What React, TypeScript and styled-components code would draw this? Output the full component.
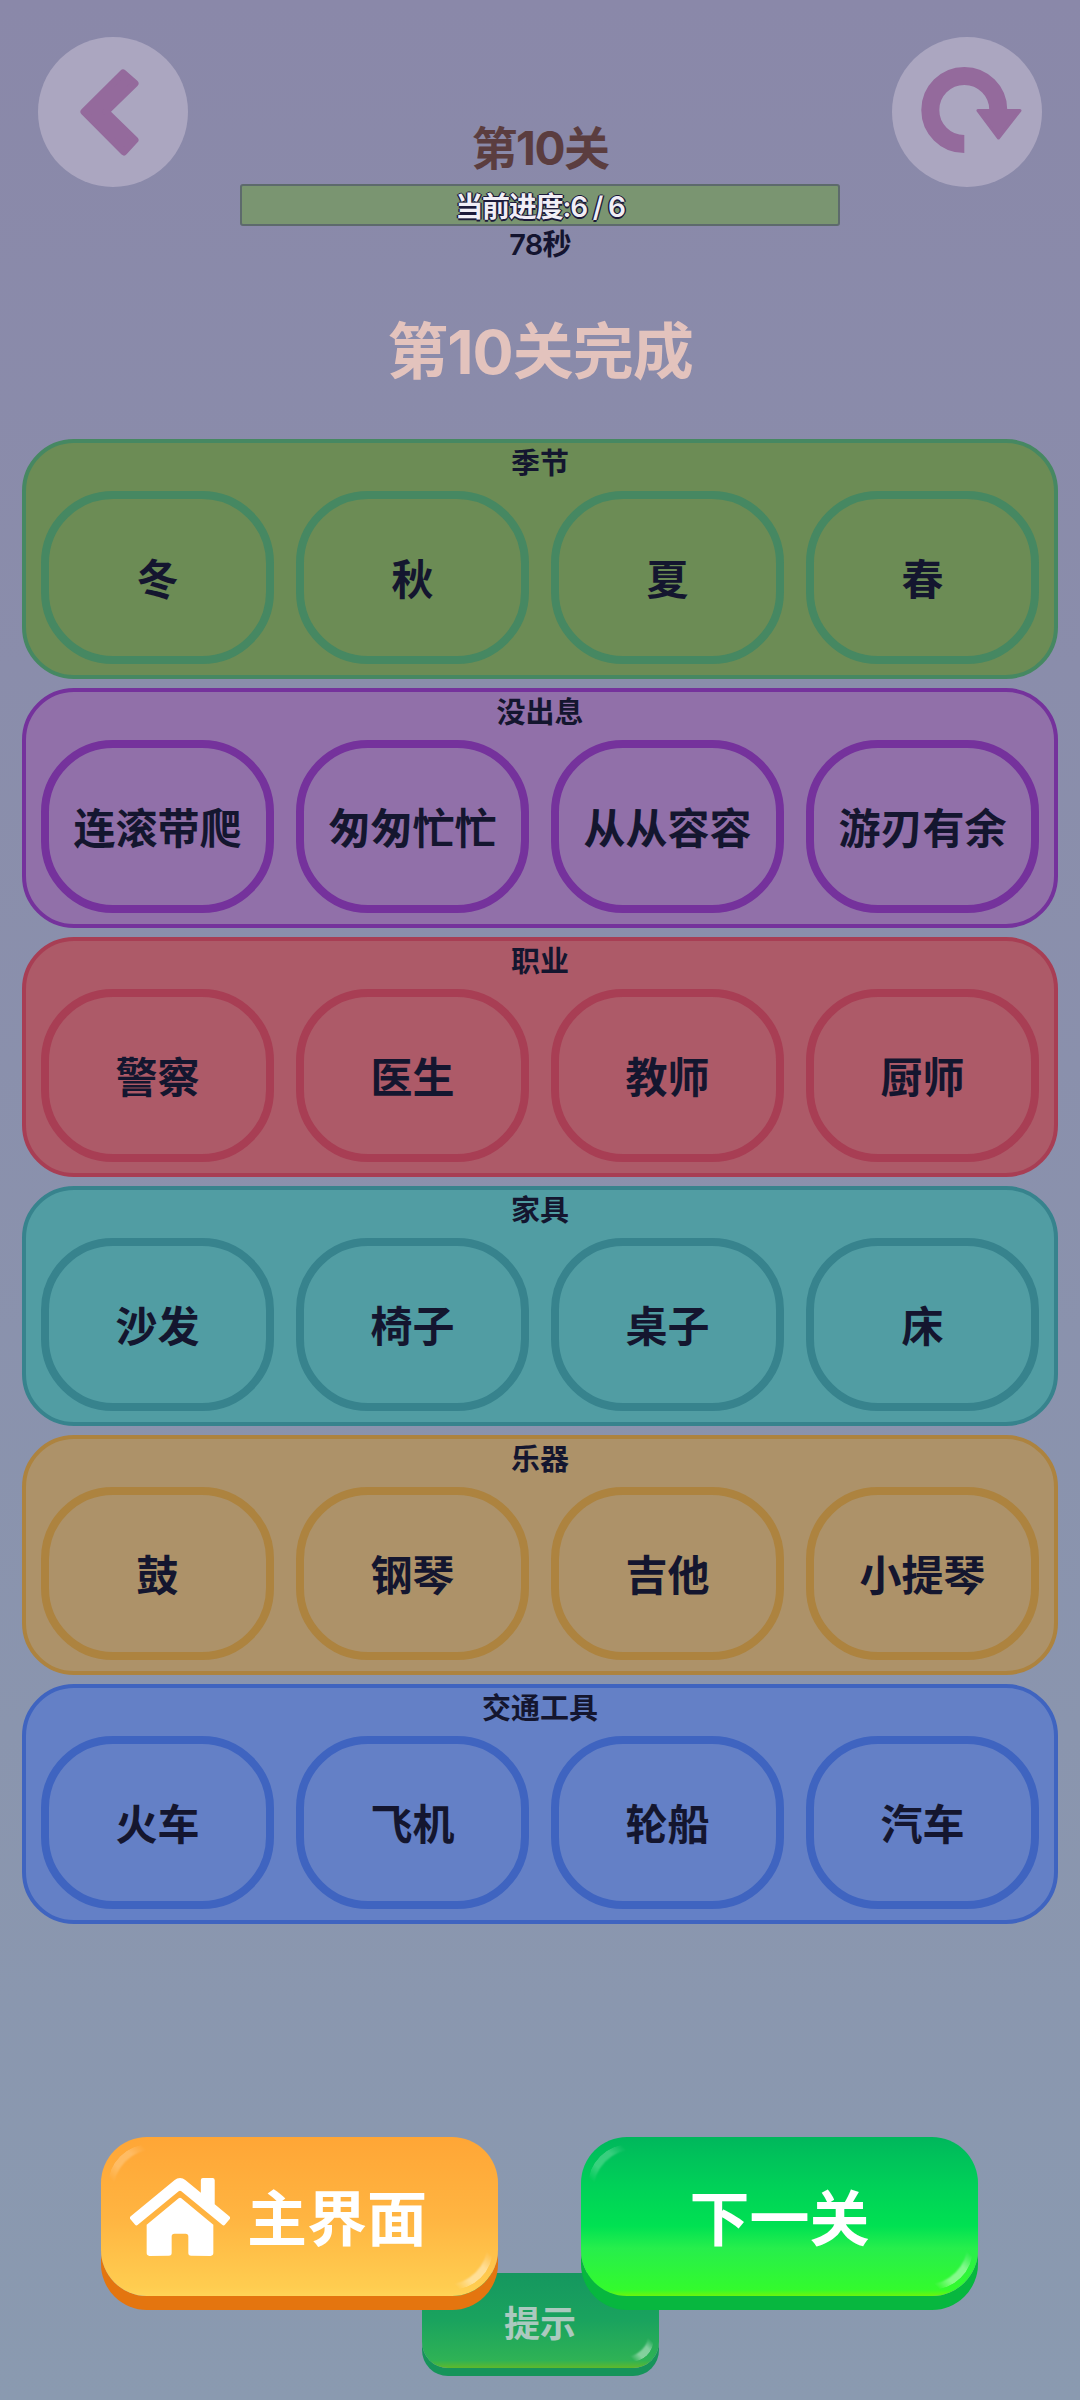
import React from "react";
import styled, { createGlobalStyle } from "styled-components";
import { FaHome } from "react-icons/fa";

const Global = createGlobalStyle`
  html, body { margin: 0; padding: 0; }
  body { font-family: Inter, "Noto Sans CJK SC", sans-serif; }
`;

const Page = styled.div`
  width: 1080px;
  height: 2400px;
  display: flex;
  flex-direction: column;
  overflow: hidden;
  background: linear-gradient(180deg, #8a88a9 0%, #8a9ab0 100%);
`;

const Header = styled.header`
  display: flex;
  justify-content: space-between;
  align-items: flex-start;
  padding: 37px 38px 0 38px;
`;

const RoundButton = styled.button`
  width: 150px;
  height: 150px;
  padding: 0;
  border: none;
  border-radius: 50%;
  background: #aba6c0;
  svg { display: block; }
`;

const Center = styled.div`
  width: 600px;
  padding-top: 76px;
  display: flex;
  flex-direction: column;
  align-items: center;
`;

const LevelTitle = styled.div`
  font-size: 46px;
  line-height: 71px;
  font-weight: 700;
  letter-spacing: -1.5px;
  color: #5b3d3f;
`;

const ProgressBar = styled.div`
  width: 600px;
  height: 42px;
  box-sizing: border-box;
  border: 2px solid #5d6a6c;
  border-radius: 3px;
  background: #7a9571;
  display: flex;
  align-items: center;
  justify-content: center;
  font-size: 28px;
  font-weight: 600;
  letter-spacing: -1.2px;
  color: #f1eef6;
  text-shadow: 1.5px 0 0 #1c1a3a, -1.5px 0 0 #1c1a3a, 0 1.5px 0 #1c1a3a, 0 -1.5px 0 #1c1a3a;
`;

const Timer = styled.div`
  font-size: 29px;
  line-height: 38px;
  font-weight: 600;
  letter-spacing: -0.8px;
  color: #14142f;
`;

const Complete = styled.h1`
  margin: 43px 0 42px;
  text-align: center;
  font-size: 61px;
  line-height: 90px;
  font-weight: 700;
  letter-spacing: -1px;
  color: #e3c3bd;
`;

const Groups = styled.section`
  padding: 0 22px;
  display: flex;
  flex-direction: column;
  gap: 9px;
`;

const Group = styled.div<{ $fill: string; $edge: string }>`
  box-sizing: border-box;
  height: 240px;
  padding: 0 15px;
  border: 4px solid ${(p) => p.$edge};
  border-radius: 52px;
  background: ${(p) => p.$fill};
`;

const GroupLabel = styled.div`
  height: 48px;
  line-height: 41px;
  text-align: center;
  font-size: 29px;
  font-weight: 700;
  color: #14162f;
`;

const TileRow = styled.div`
  display: grid;
  grid-template-columns: repeat(4, 233px);
  justify-content: space-between;
`;

const Tile = styled.div<{ $edge: string }>`
  box-sizing: border-box;
  height: 173px;
  padding-bottom: 3px;
  border: 8px solid ${(p) => p.$edge};
  border-radius: 72px;
  display: flex;
  align-items: center;
  justify-content: center;
  font-size: 42px;
  font-weight: 700;
  color: #14162f;
`;

const Footer = styled.footer`
  margin-top: auto;
  padding-bottom: 32px;
  display: flex;
  flex-direction: column;
  align-items: center;
`;

const ButtonRow = styled.div`
  align-self: stretch;
  padding: 0 102px 0 101px;
  display: flex;
  justify-content: space-between;
`;

const GameButton = styled.button<{ $face: string; $base: string; $depth: number; $radius: number }>`
  position: relative;
  padding: 0;
  border: none;
  display: flex;
  align-items: center;
  font-family: inherit;
  font-weight: 700;
  overflow: visible;
  border-radius: ${(p) => p.$radius}px;
  background: ${(p) => p.$face};
  box-shadow: 0 ${(p) => p.$depth}px 0 ${(p) => p.$base};

  &::before, &::after {
    content: "";
    position: absolute;
    border-radius: 50%;
    width: ${(p) => p.$radius * 1.8}px;
    height: ${(p) => p.$radius * 1.8}px;
  }
  &::before {
    left: 7px;
    top: 7px;
    box-shadow: inset 6px 6px 2px -1px rgba(255, 255, 255, 0.22);
    mask-image: linear-gradient(45deg, transparent 30%, #000 42%, #000 58%, transparent 70%);
  }
  &::after {
    right: 5px;
    bottom: 6px;
    box-shadow: inset -6px -6px 2px -1px rgba(255, 255, 255, 0.42);
    mask-image: linear-gradient(45deg, transparent 30%, #000 42%, #000 58%, transparent 70%);
  }
`;

const BigButton = styled(GameButton)<{ $centered?: boolean }>`
  z-index: 1;
  width: 397px;
  height: 159px;
  gap: 17px;
  padding: 0 0 5px ${(p) => (p.$centered ? 0 : 29)}px;
  justify-content: ${(p) => (p.$centered ? "center" : "flex-start")};
  font-size: 60px;
  color: #fff;
  svg { margin-top: 5px; }
`;

const HintButton = styled(GameButton)`
  width: 237px;
  height: 95px;
  margin-top: -23px;
  justify-content: center;
  font-size: 36px;
  color: #abc9bf;
  &::before { display: none; }
`;

const groups = [
  { label: "季节", fill: "#6c8c55", edge: "#468862", words: ["冬", "秋", "夏", "春"] },
  { label: "没出息", fill: "#9170a9", edge: "#75329c", words: ["连滚带爬", "匆匆忙忙", "从从容容", "游刃有余"] },
  { label: "职业", fill: "#ad5a68", edge: "#a83e54", words: ["警察", "医生", "教师", "厨师"] },
  { label: "家具", fill: "#519da3", edge: "#37838d", words: ["沙发", "椅子", "桌子", "床"] },
  { label: "乐器", fill: "#ad9269", edge: "#ad833f", words: ["鼓", "钢琴", "吉他", "小提琴"] },
  { label: "交通工具", fill: "#6480c6", edge: "#3f64c0", words: ["火车", "飞机", "轮船", "汽车"] },
];

export default function App() {
  return (
    <Page>
      <Global />
      <Header>
        <RoundButton aria-label="返回">
          <svg width="150" height="150" viewBox="0 0 150 150">
            <polygon
              points="85,36 97,46.5 68,74.7 97,103 86,115 46,74.7"
              fill="#946a9c"
              stroke="#946a9c"
              strokeWidth="7"
              strokeLinejoin="round"
            />
          </svg>
        </RoundButton>
        <Center>
          <LevelTitle>第10关</LevelTitle>
          <ProgressBar>当前进度:6 / 6</ProgressBar>
          <Timer>78秒</Timer>
        </Center>
        <RoundButton aria-label="重玩">
          <svg width="150" height="150" viewBox="0 0 150 150">
            <path d="M72.3 107A34 34 0 1 1 106.3 73" fill="none" stroke="#946a9c" strokeWidth="18" />
            <polygon
              points="86,73.5 128,73.5 106.5,101"
              fill="#946a9c"
              stroke="#946a9c"
              strokeWidth="3"
              strokeLinejoin="round"
            />
          </svg>
        </RoundButton>
      </Header>
      <Complete>第10关完成</Complete>
      <Groups>
        {groups.map((g) => (
          <Group key={g.label} $fill={g.fill} $edge={g.edge}>
            <GroupLabel>{g.label}</GroupLabel>
            <TileRow>
              {g.words.map((w) => (
                <Tile key={w} $edge={g.edge}>
                  {w}
                </Tile>
              ))}
            </TileRow>
          </Group>
        ))}
      </Groups>
      <Footer>
        <ButtonRow>
          <BigButton
            $face="linear-gradient(180deg, #ffa636 0%, #ffb441 50%, #ffcd50 95%, #ffd458 100%)"
            $base="#e4750f"
            $depth={14}
            $radius={46}
          >
            <FaHome size={100} />
            主界面
          </BigButton>
          <BigButton
            $centered
            $face="linear-gradient(180deg, #00b75c 0%, #00d058 30%, #00e152 56%, #27ee4c 70%, #33fb2d 96%, #6cf50c 100%)"
            $base="#07b73f"
            $depth={14}
            $radius={46}
          >
            下一关
          </BigButton>
        </ButtonRow>
        <HintButton
          $face="linear-gradient(180deg, #15975f 0%, #1aa35e 50%, #2fb255 92%, #5eb92c 100%)"
          $base="#16945a"
          $depth={8}
          $radius={26}
        >
          提示
        </HintButton>
      </Footer>
    </Page>
  );
}
